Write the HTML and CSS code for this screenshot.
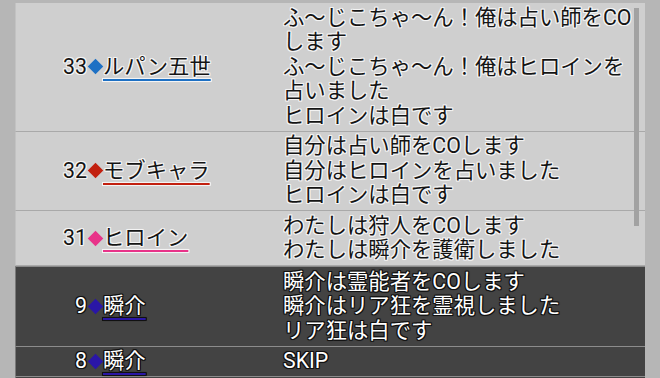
FILE: index.html
```html
<!DOCTYPE html>
<html lang="ja">
  <head>
    <meta charset="UTF-8" />
    <meta name="viewport" content="width=device-width, initial-scale=1.0" />
    <title>ログ</title>
    <link rel="stylesheet" href="styles.css">
  </head>
  <body>
    <div class="log">
      <div class="row light">
        <div class="who lupin">
          <span class="num">33</span><span class="mark"></span><span class="name">ルパン五世</span>
        </div>
        <div class="says">
          ふ～じこちゃ～ん！俺は占い師をCO<br />します<br />
          ふ～じこちゃ～ん！俺はヒロインを<br />占いました<br />
          ヒロインは白です
        </div>
      </div>

      <div class="row light">
        <div class="who mob">
          <span class="num">32</span><span class="mark"></span><span class="name">モブキャラ</span>
        </div>
        <div class="says">
          自分は占い師をCOします<br />
          自分はヒロインを占いました<br />
          ヒロインは白です
        </div>
      </div>

      <div class="row light">
        <div class="who heroine">
          <span class="num">31</span><span class="mark"></span><span class="name">ヒロイン</span>
        </div>
        <div class="says">
          わたしは狩人をCOします<br />
          わたしは瞬介を護衛しました
        </div>
      </div>

      <div class="row dark">
        <div class="who shunsuke">
          <span class="num">9</span><span class="mark"></span><span class="name">瞬介</span>
        </div>
        <div class="says">
          瞬介は霊能者をCOします<br />
          瞬介はリア狂を霊視しました<br />
          リア狂は白です
        </div>
      </div>

      <div class="row dark">
        <div class="who shunsuke">
          <span class="num">8</span><span class="mark"></span><span class="name">瞬介</span>
        </div>
        <div class="says">SKIP</div>
      </div>

      <div class="row dark empty"></div>

      <!-- scroll thumb sits over the list -->
      <div class="thumb"></div>
    </div>
  </body>
</html>
```

FILE: styles.css
```css
html,
body {
  height: 378px;
}
body {
  margin: 0;
  overflow: hidden;
  background-color: #b6b6b6;
  font-family: "Roboto", "Noto Sans CJK JP", sans-serif;
  font-size: 21.33px;
  line-height: 24.5px;
}
.log {
  position: relative;
  margin: 3px 15px 0;
}
.row {
  display: grid;
  grid-template-columns: 267px 1fr;
  padding: 2.5px 0;
  border-bottom: 1px solid #a9a9a9;
  border-left: 1px solid #c2c2c2;
}
.light {
  background-color: #cfcfcf;
  color: #141414;
  text-shadow: 1px 0 #f4f4f4, -1px 0 #f4f4f4, 0 1px #f4f4f4, 0 -1px #f4f4f4,
    1px 1px #f4f4f4, -1px -1px #f4f4f4, 1px -1px #f4f4f4, -1px 1px #f4f4f4,
    0 0 2px #f4f4f4;
}
.light + .dark {
  border-top: 1px solid #8a8a8a;
}
.dark {
  background-color: #434343;
  color: #fff;
  border-left-color: #7a7a7a;
  border-bottom: 1px solid #8c8c8c;
  text-shadow: 1px 0 #111, -1px 0 #111, 0 1px #111, 0 -1px #111,
    1px 1px #111, -1px -1px #111, 1px -1px #111, -1px 1px #111, 0 0 2px #111;
}
.empty {
  height: 4px;
}
.who {
  display: flex;
  align-items: center;
}
.num {
  width: 71px;
  text-align: right;
}
.mark {
  flex: none;
  width: 11px;
  height: 11px;
  margin: 0 2.5px;
  background-color: var(--c);
  transform: rotate(45deg);
}
.name {
  text-decoration: underline;
  text-decoration-color: var(--c);
  text-decoration-thickness: 2px;
  text-underline-offset: 5px;
}
.says {
  white-space: nowrap;
}
.lupin {
  --c: #1d70c4;
}
.mob {
  --c: #c2200f;
}
.heroine {
  --c: #e83389;
}
.shunsuke {
  --c: #2a16a6;
}
.thumb {
  position: absolute;
  top: 5px;
  left: 619px;
  width: 5px;
  height: 218px;
  background-color: #a2a2a2;
}
```
